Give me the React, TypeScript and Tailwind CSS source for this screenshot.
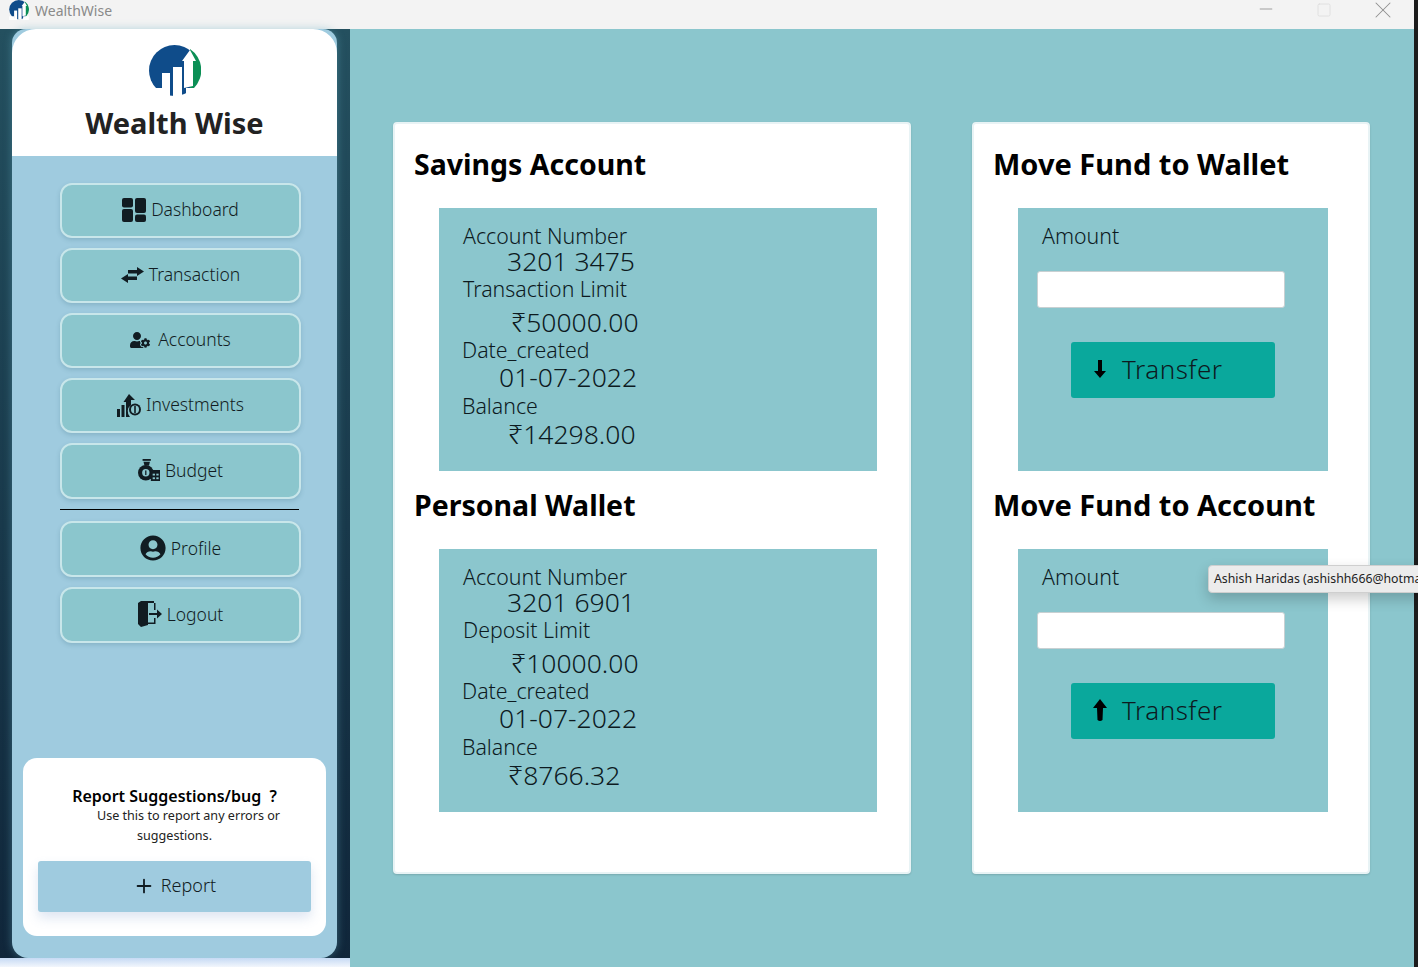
import { Minus, Plus, Square, X } from "lucide-react";
import type { ReactNode } from "react";
import { FaUserCircle, FaUserCog } from "react-icons/fa";

const Logo = ({ className }: { className: string }) => (
  <svg viewBox="0 0 52 53" className={className}>
    <circle cx="25.5" cy="25.5" r="25.5" fill="#0f4c8a" />
    <path d="M41 4 A25.5 25.5 0 0 1 45 43 L41 43 Z" fill="#0b8f55" />
    <path d="M0 43 h13 v10 h-13 Z M37 43 h15 v10 h-15 Z" fill="#fff" />
    <rect x="13" y="28" width="8" height="25" fill="#fff" />
    <rect x="24" y="22" width="9" height="30" fill="#fff" />
    <path d="M35 43 V16 H33 L41 5 L47 16 H44 V41 Z" fill="#fff" />
  </svg>
);

const DashIcon = () => (
  <svg viewBox="0 0 24 24" className="h-6 w-6" fill="#111c22">
    <rect x="0" y="0" width="11" height="9.5" rx="2" />
    <rect x="0" y="11" width="11" height="13" rx="2" />
    <rect x="13" y="0" width="11" height="15" rx="2" />
    <rect x="13" y="16.5" width="11" height="7.5" rx="2" />
  </svg>
);

const SwapIcon = () => (
  <svg viewBox="0 0 23 16" className="h-4 w-[23px]" fill="#111c22">
    <path d="M7 3 H16 V0 L23 4.5 L16 9 V6.5 H7 Z" />
    <path d="M16 9.5 H7 V7 L0 11.5 L7 16 V13 H16 Z" />
  </svg>
);

const InvestIcon = () => (
  <svg viewBox="0 0 24 24" className="h-6 w-6" fill="#111c22">
    <rect x="0" y="16" width="3" height="8" />
    <rect x="4.5" y="12" width="3" height="12" />
    <path d="M9 24 V9 H6.5 L12 1 L18 7 H14 V12 A8 8 0 0 0 13 24 Z" />
    <circle cx="18" cy="16.5" r="6" />
    <circle cx="18" cy="16.5" r="4" fill="#8bc6cd" />
    <rect x="17.2" y="13" width="1.6" height="7" />
  </svg>
);

const BudgetIcon = () => (
  <svg viewBox="0 0 24 24" className="h-6 w-[22px]" fill="#111c22">
    <rect x="5" y="0" width="9" height="2" />
    <path d="M6 3 H13 L12 7 H7 Z" />
    <circle cx="8.5" cy="15" r="8.5" />
    <circle cx="8.5" cy="15" r="4" fill="#8bc6cd" />
    <rect x="7.8" y="12.5" width="1.4" height="5" />
    <rect x="14" y="12" width="10" height="12" />
    <rect x="16" y="16" width="2.5" height="2" fill="#8bc6cd" />
    <rect x="20" y="16" width="2.5" height="2" fill="#8bc6cd" />
    <rect x="16" y="20" width="2.5" height="2" fill="#8bc6cd" />
    <rect x="20" y="20" width="2.5" height="2" fill="#8bc6cd" />
  </svg>
);

const LogoutIcon = () => (
  <svg viewBox="0 0 24 26" className="h-[26px] w-6" fill="#111c22">
    <path d="M0 2 L3 0 H16 V2 H10 V24 L3 26 L0 23 Z" />
    <path d="M16 2 H17.5 V9 H16 Z M16 17 H17.5 V23 H10 V21.5 H16 Z" />
    <path d="M11 12 H19 V8.5 L24 13 L19 17.5 V14 H11 Z" />
  </svg>
);

const ArrowUp = () => (
  <svg viewBox="0 0 14 22" className="h-[22px] w-[14px]" fill="#000">
    <path d="M7 0 L14 9 H10 L9.5 21 Q7 23 4.5 21 L4 9 H0 Z" />
  </svg>
);

const ArrowDown = () => (
  <svg viewBox="0 0 12 18" className="h-[18px] w-[12px]" fill="#000">
    <path d="M4 0 H8 V11 H12 L6 18 L0 11 H4 Z" />
  </svg>
);

const NavButton = ({
  icon,
  label,
  tall,
}: {
  icon: ReactNode;
  label: string;
  tall?: boolean;
}) => (
  <button
    className={`flex w-[241px] items-center justify-center gap-[5px] rounded-[12px] border-2 border-[#c8e6ea] bg-[#8bc6cd] pb-[2px] text-[17.5px] font-light text-[#111c22] shadow-[0_2px_4px_rgba(60,110,130,0.25)] ${
      tall ? "h-[56px]" : "h-[55px]"
    }`}
  >
    {icon}
    {label}
  </button>
);

const Row = ({ className, children }: { className: string; children: ReactNode }) => (
  <p className={`whitespace-nowrap font-light text-[#0d1a1f] ${className}`}>{children}</p>
);

const AccountPanel = ({
  number,
  limitLabel,
  limit,
  balance,
}: {
  number: string;
  limitLabel: string;
  limit: string;
  balance: string;
}) => (
  <div className="h-[263px] w-[438px] bg-[#8bc6cd] pt-[14px]">
    <Row className="ml-[24px] h-[28px] text-[21.3px] leading-[28px]">Account Number</Row>
    <Row className="ml-[68px] h-[25px] text-[26.5px] leading-[22px]">{number}</Row>
    <Row className="ml-[24px] h-[27px] text-[21.3px] leading-[27px]">{limitLabel}</Row>
    <Row className="ml-[72px] mt-[6px] h-[28px] text-[26.5px] leading-[28px]">{limit}</Row>
    <Row className="ml-[23px] h-[28px] text-[21.3px] leading-[28px]">Date_created</Row>
    <Row className="ml-[60px] h-[28px] text-[26.5px] leading-[26px]">01-07-2022</Row>
    <Row className="ml-[23px] h-[28px] text-[21.3px] leading-[28px]">Balance</Row>
    <Row className="ml-[69px] h-[28px] text-[26.5px] leading-[28px]">{balance}</Row>
  </div>
);

const TransferPanel = ({ icon }: { icon: ReactNode }) => (
  <div className="h-[263px] w-[310px] bg-[#8bc6cd] pt-[14px]">
    <Row className="ml-[24px] h-[28px] text-[21.3px] leading-[28px]">Amount</Row>
    <input className="ml-[19px] mt-[21px] block h-[37px] w-[248px] rounded-[3px] border border-[#c8d0d2] bg-white" />
    <button className="ml-[53px] mt-[34px] flex h-[56px] w-[204px] items-center rounded-[3px] bg-[#0aa89c] pb-[2px] pl-[21px] text-[26px] font-light tracking-[0.5px] text-[#0d1a1f]">
      <span className="flex w-[16px] justify-center">{icon}</span>
      <span className="ml-[14px]">Transfer</span>
    </button>
  </div>
);

const Heading = ({ className, children }: { className: string; children: ReactNode }) => (
  <h2 className={`whitespace-nowrap font-bold leading-[40px] text-black ${className}`}>
    {children}
  </h2>
);

export default function App() {
  return (
    <div className="relative flex h-[967px] w-[1418px] overflow-hidden bg-white font-['Noto_Sans',sans-serif]">
      <div className="flex w-[1414px] flex-col">
        <header className="flex h-[29px] shrink-0 items-start bg-[#f3f3f3] pl-[9px]">
          <Logo className="h-[20px] w-[20px]" />
          <span className="ml-[6px] text-[14px] leading-[22px] text-[#8a8a8a]">WealthWise</span>
          <div className="ml-auto flex items-center pr-[17px] text-[#8f8f8f]">
            <Minus className="h-[20px] w-[20px] -translate-y-[5px]" strokeWidth={1} />
            <Square className="ml-[40px] h-[16px] w-[16px] -translate-y-[4px] text-[#e0e0e0]" strokeWidth={1.5} />
            <X className="ml-[37px] h-[28px] w-[28px] -translate-y-[4px]" strokeWidth={0.9} />
          </div>
        </header>

        <div className="flex flex-1">
          <aside className="flex w-[350px] flex-col">
            <div className="h-[929px] bg-gradient-to-b from-[#24505f] to-[#10263a] pl-[12px]">
              <div className="flex h-full w-[325px] flex-col rounded-t-[14px] rounded-b-[16px] bg-[#9fcbdf] shadow-[0_0_8px_rgba(100,170,190,0.45)]">
                <div className="flex h-[127px] flex-col items-center rounded-t-[24px] bg-white pt-[16px]">
                  <Logo className="h-[53px] w-[52px]" />
                  <p className="mt-[5px] text-[29px] font-bold leading-[40px] text-[#222]">
                    Wealth Wise
                  </p>
                </div>
                <nav className="mt-[27px] flex flex-col gap-[10px] pl-[48px]">
                  <NavButton icon={<DashIcon />} label="Dashboard" />
                  <NavButton icon={<SwapIcon />} label="Transaction" />
                  <NavButton icon={<FaUserCog className="mr-[3px] h-[20px] w-[20px]" />} label="Accounts" />
                  <NavButton icon={<InvestIcon />} label="Investments" />
                  <NavButton icon={<BudgetIcon />} label="Budget" tall />
                  <hr className="mb-px w-[239px] border-t border-black" />
                  <NavButton icon={<FaUserCircle className="h-[26px] w-[26px]" />} label="Profile" tall />
                  <NavButton icon={<LogoutIcon />} label="Logout" tall />
                </nav>
                <div className="ml-[11px] mt-[115px] flex h-[178px] w-[303px] flex-col items-center rounded-[14px] bg-white pt-[28px]">
                  <p className="text-[16px] font-semibold leading-[20px] text-black">
                    Report Suggestions/bug&nbsp;&nbsp;?
                  </p>
                  <p className="ml-[28px] text-[12.6px] leading-[20px] text-[#222]">
                    Use this to report any errors or
                  </p>
                  <p className="text-[12.6px] leading-[20px] text-[#222]">suggestions.</p>
                  <button className="mt-[15px] flex h-[51px] w-[273px] items-center justify-center gap-[6px] rounded-[3px] bg-[#9fcbdf] pb-[2px] text-[18px] font-light text-[#111c22] shadow-[0_6px_12px_rgba(90,130,190,0.2)]">
                    <Plus className="h-[22px] w-[22px]" strokeWidth={2} />
                    Report
                  </button>
                </div>
              </div>
            </div>
            <div className="h-[9px] bg-gradient-to-b from-[#c6daf4] to-[#f2f6fc]" />
          </aside>

          <main className="flex flex-1 gap-[61px] bg-[#8bc6cd] pl-[43px] pt-[93px]">
            <section className="h-[752px] w-[518px] rounded-[4px] border-2 border-[#e8f3f5] bg-white pl-[44px] shadow-[0_1px_2px_rgba(0,0,0,0.15)]">
              <Heading className="-ml-[25px] mb-[24px] mt-[20px] text-[28.5px]">Savings Account</Heading>
              <AccountPanel
                number="3201 3475"
                limitLabel="Transaction Limit"
                limit="₹50000.00"
                balance="₹14298.00"
              />
              <Heading className="-ml-[25px] mb-[24px] mt-[14px] text-[28.5px]">Personal Wallet</Heading>
              <AccountPanel
                number="3201 6901"
                limitLabel="Deposit Limit"
                limit="₹10000.00"
                balance="₹8766.32"
              />
            </section>
            <section className="h-[752px] w-[398px] rounded-[4px] border-2 border-[#e8f3f5] bg-white pl-[44px] shadow-[0_1px_2px_rgba(0,0,0,0.15)]">
              <Heading className="-ml-[25px] mb-[24px] mt-[20px] text-[29px]">Move Fund to Wallet</Heading>
              <TransferPanel icon={<ArrowDown />} />
              <Heading className="-ml-[25px] mb-[24px] mt-[14px] text-[29px]">Move Fund to Account</Heading>
              <TransferPanel icon={<ArrowUp />} />
            </section>
          </main>
        </div>
      </div>
      <div className="w-[4px] bg-[#1c1c1c]" />

      <div className="absolute left-[1208px] top-[565px] flex h-[28px] w-[260px] items-center whitespace-nowrap rounded-[4px] border border-[#cfcfcf] bg-[#ececec] pl-[5px] pt-[1px] text-[12.3px] text-[#222] shadow-[0_6px_14px_rgba(0,0,0,0.2)]">
        Ashish Haridas (ashishh666@hotmail.com)
      </div>
    </div>
  );
}
